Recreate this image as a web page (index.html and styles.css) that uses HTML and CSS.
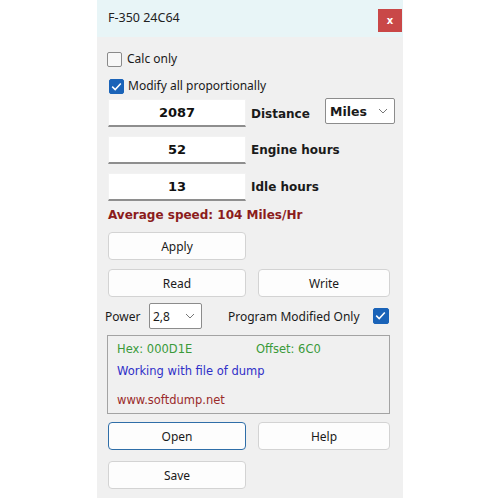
FILE: index.html
```html
<!DOCTYPE html>
<html>
<head>
<meta charset="utf-8">
<link rel="stylesheet" href="styles.css">
</head>
<body>
<div class="window">
  <div class="titlebar">
    <span class="title">F-350 24C64</span>
    <span class="close">x</span>
  </div>
  <div class="content">
    <div class="check-row calc"><span class="cb"></span><span>Calc only</span></div>
    <div class="check-row modify"><span class="cb checked"><svg viewBox="0 0 15 15" width="15" height="15"><path d="M3.2 7.6 L6.2 10.6 L11.8 4.4" fill="none" stroke="#fff" stroke-width="1.5"/></svg></span><span>Modify all proportionally</span></div>
    <div class="field-row first">
      <div class="num">2087</div>
      <span class="lbl lbl-dist">Distance</span>
      <div class="select miles"><span class="sel-text bold">Miles</span><svg class="chev" viewBox="0 0 10 6" width="10" height="6"><path d="M1 1 L5 5 L9 1" fill="none" stroke="#777" stroke-width="1"/></svg></div>
    </div>
    <div class="field-row">
      <div class="num">52</div>
      <span class="lbl">Engine hours</span>
    </div>
    <div class="field-row">
      <div class="num">13</div>
      <span class="lbl">Idle hours</span>
    </div>
    <div class="avg">Average speed: 104 Miles/Hr</div>
    <div class="btn-row apply-row"><div class="btn wide">Apply</div></div>
    <div class="btn-row rw-row"><div class="btn wide">Read</div><div class="btn narrow">Write</div></div>
    <div class="power-row">
      <span class="power-lbl">Power</span>
      <div class="select power"><span class="sel-text">2,8</span><svg class="chev" viewBox="0 0 10 6" width="10" height="6"><path d="M1 1 L5 5 L9 1" fill="none" stroke="#777" stroke-width="1"/></svg></div>
      <span class="pmo">Program Modified Only</span>
      <span class="cb checked pmo-cb"><svg viewBox="0 0 15 15" width="15" height="15"><path d="M3.2 7.6 L6.2 10.6 L11.8 4.4" fill="none" stroke="#fff" stroke-width="1.5"/></svg></span>
    </div>
    <div class="group">
      <div class="hex-line"><span class="hex">Hex: 000D1E</span><span class="offset">Offset: 6C0</span></div>
      <div class="working">Working with file of dump</div>
      <div class="www">www.softdump.net</div>
    </div>
    <div class="btn-row oh-row"><div class="btn wide focused">Open</div><div class="btn narrow">Help</div></div>
    <div class="btn-row save-row"><div class="btn wide">Save</div></div>
  </div>
</div>
</body>
</html>
```

FILE: styles.css
```css
html, body {
  margin: 0;
  padding: 0;
  background: #ffffff;
}
body {
  display: flex;
  justify-content: center;
  font-family: "Noto Sans", "Open Sans", sans-serif;
  font-size: 12px;
  color: #1a1a1a;
}
.window {
  width: 306px;
  height: 498px;
  background: #f0f0f0;
  display: flex;
  flex-direction: column;
}
.titlebar {
  height: 37px;
  background: #e8f5f7;
  display: flex;
  align-items: flex-start;
  justify-content: space-between;
  flex-shrink: 0;
}
.title {
  margin-left: 11px;
  margin-top: 9px;
  font-size: 12.5px;
  color: #222;
}
.close {
  width: 24px;
  height: 23px;
  margin-top: 9px;
  margin-right: 1px;
  background: #c94848;
  color: #fff;
  font-family: "DejaVu Sans", sans-serif;
  font-weight: bold;
  font-size: 10px;
  display: flex;
  align-items: center;
  justify-content: center;
}
.content {
  display: flex;
  flex-direction: column;
  padding-left: 11px;
}
.check-row {
  display: flex;
  align-items: center;
  height: 16px;
  line-height: 16px;
}
.check-row.calc {
  margin-top: 14px;
  margin-left: -1px;
}
.check-row.calc .cb { margin-right: 5px; }
.check-row.modify {
  margin-top: 11px;
  margin-left: 1px;
}
.check-row.modify .cb { margin-right: 4px; }
.cb {
  width: 15px;
  height: 15px;
  box-sizing: border-box;
  border: 1px solid #8a8a8a;
  background: #f7f7f7;
  border-radius: 2px;
  display: inline-flex;
  flex-shrink: 0;
}
.cb.checked {
  background: #1a63b8;
  border-color: #1a63b8;
}
.cb svg { display: block; margin: -1px; }
.field-row {
  display: flex;
  align-items: center;
  height: 28px;
  margin-top: 9px;
}
.field-row.first { margin-top: 5px; }
.num {
  width: 138px;
  height: 28px;
  box-sizing: border-box;
  background: #ffffff;
  border: 1px solid #f2f2f2;
  border-bottom: 2px solid #8e8e8e;
  font-family: "DejaVu Sans", sans-serif;
  font-weight: bold;
  font-size: 13px;
  display: flex;
  align-items: center;
  justify-content: center;
  color: #111;
}
.lbl {
  margin-left: 5px;
  font-family: "DejaVu Sans", sans-serif;
  font-weight: bold;
  font-size: 12px;
  color: #1a1a1a;
}
.lbl-dist { width: 74px; margin-top: 1px; }
.select {
  height: 26px;
  box-sizing: border-box;
  background: #ffffff;
  border: 1px solid #8c8c8c;
  border-radius: 2px;
  display: flex;
  align-items: center;
  justify-content: space-between;
  padding: 0 6px 0 4px;
}
.select.miles {
  width: 70px;
  align-self: flex-start;
  margin-top: -1px;
}
.sel-text.bold {
  font-family: "DejaVu Sans", sans-serif;
  font-weight: bold;
  font-size: 12.5px;
}
.chev { display: block; }
.avg {
  margin-top: 6px;
  height: 16px;
  line-height: 16px;
  font-family: "DejaVu Sans", sans-serif;
  font-weight: bold;
  font-size: 12px;
  color: #8b1c1c;
}
.btn-row {
  display: flex;
  gap: 12px;
  margin-top: 9px;
}
.btn-row.oh-row { margin-top: 8px; }
.btn-row.save-row { margin-top: 11px; }
.btn {
  height: 28px;
  box-sizing: border-box;
  background: #fdfdfd;
  border: 1px solid #d3d3d3;
  border-radius: 4px;
  display: flex;
  align-items: center;
  justify-content: center;
  font-size: 12px;
  color: #1a1a1a;
}
.btn.wide { width: 138px; }
.btn.narrow { width: 132px; }
.btn.focused {
  border: 1px solid #2f6ea8;
}
.power-row {
  display: flex;
  align-items: center;
  height: 26px;
  margin-top: 6px;
}
.power-lbl {
  margin-left: -3px;
  width: 44px;
}
.select.power {
  width: 53px;
  padding-left: 3px;
}
.pmo {
  margin-left: 26px;
  width: 145px;
}
.pmo-cb {
  width: 16px;
  height: 16px;
}
.group {
  margin-top: 6px;
  margin-left: -1px;
  width: 283px;
  height: 79px;
  box-sizing: border-box;
  border: 1px solid #a3a3a3;
  font-family: "DejaVu Sans", sans-serif;
  font-size: 11.5px;
  padding-left: 9px;
  display: flex;
  flex-direction: column;
}
.hex-line {
  display: flex;
  height: 16px;
  line-height: 16px;
  margin-top: 5px;
  color: #3a9a3a;
}
.hex { width: 139px; }
.working {
  margin-top: 6px;
  height: 16px;
  line-height: 16px;
  color: #2f2fc8;
}
.www {
  margin-top: 13px;
  height: 16px;
  line-height: 16px;
  color: #9a2a2a;
}
```
